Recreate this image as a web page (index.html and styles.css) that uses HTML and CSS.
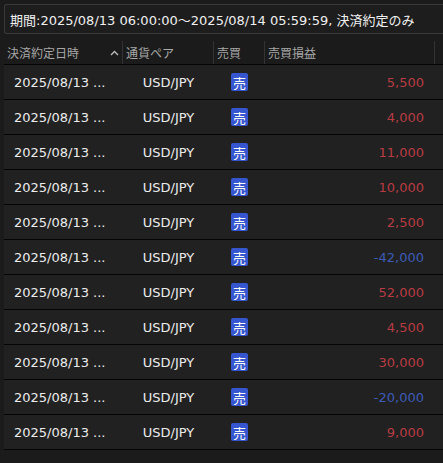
FILE: index.html
```html
<!DOCTYPE html>
<html lang="ja">
<head>
<meta charset="utf-8">
<link rel="stylesheet" href="styles.css">
</head>
<body>
<div class="period">期間:2025/08/13 06:00:00～2025/08/14 05:59:59, 決済約定のみ</div>
<div class="table">
  <div class="head">
    <div class="hc c1">決済約定日時<span class="caret"><svg width="9" height="6" viewBox="0 0 9 6"><path d="M1 5 L4.5 1.5 L8 5" fill="none" stroke="#bbb" stroke-width="1.4"/></svg></span></div>
    <div class="hc c2">通貨ペア</div>
    <div class="hc c3">売買</div>
    <div class="hc c4">売買損益</div>
    <div class="hc c5"></div>
  </div>
  <div class="row"><div class="c1 d">2025/08/13 ...</div><div class="c2 p">USD/JPY</div><div class="c3 b"><span class="badge">売</span></div><div class="c4 v pos">5,500</div></div>
  <div class="row"><div class="c1 d">2025/08/13 ...</div><div class="c2 p">USD/JPY</div><div class="c3 b"><span class="badge">売</span></div><div class="c4 v pos">4,000</div></div>
  <div class="row"><div class="c1 d">2025/08/13 ...</div><div class="c2 p">USD/JPY</div><div class="c3 b"><span class="badge">売</span></div><div class="c4 v pos">11,000</div></div>
  <div class="row"><div class="c1 d">2025/08/13 ...</div><div class="c2 p">USD/JPY</div><div class="c3 b"><span class="badge">売</span></div><div class="c4 v pos">10,000</div></div>
  <div class="row"><div class="c1 d">2025/08/13 ...</div><div class="c2 p">USD/JPY</div><div class="c3 b"><span class="badge">売</span></div><div class="c4 v pos">2,500</div></div>
  <div class="row"><div class="c1 d">2025/08/13 ...</div><div class="c2 p">USD/JPY</div><div class="c3 b"><span class="badge">売</span></div><div class="c4 v neg">-42,000</div></div>
  <div class="row"><div class="c1 d">2025/08/13 ...</div><div class="c2 p">USD/JPY</div><div class="c3 b"><span class="badge">売</span></div><div class="c4 v pos">52,000</div></div>
  <div class="row"><div class="c1 d">2025/08/13 ...</div><div class="c2 p">USD/JPY</div><div class="c3 b"><span class="badge">売</span></div><div class="c4 v pos">4,500</div></div>
  <div class="row"><div class="c1 d">2025/08/13 ...</div><div class="c2 p">USD/JPY</div><div class="c3 b"><span class="badge">売</span></div><div class="c4 v pos">30,000</div></div>
  <div class="row"><div class="c1 d">2025/08/13 ...</div><div class="c2 p">USD/JPY</div><div class="c3 b"><span class="badge">売</span></div><div class="c4 v neg">-20,000</div></div>
  <div class="row"><div class="c1 d">2025/08/13 ...</div><div class="c2 p">USD/JPY</div><div class="c3 b"><span class="badge">売</span></div><div class="c4 v pos">9,000</div></div>
</div>
</body>
</html>
```
FILE: styles.css
```css
html, body {
  margin: 0;
  padding: 0;
  background: #1b1b1b;
  height: 100%;
  overflow: hidden;
}
body {
  font-family: "DejaVu Sans", "Noto Sans CJK JP", sans-serif;
  color: #e8e8e8;
}
.period {
  margin: 4px 0 0 4px;
  box-sizing: border-box;
  height: 30px;
  border: 1px solid #3a3a3a;
  border-right: none;
  border-radius: 3px 0 0 3px;
  background: #1d1d1d;
  display: flex;
  align-items: center;
  padding-left: 5px;
  font-size: 13px;
  color: #f0f0f0;
  white-space: nowrap;
  overflow: hidden;
}
.table {
  margin: 7px 0 0 4px;
}
.head {
  display: flex;
  height: 23px;
  border-bottom: 1px solid #050505;
}
.hc {
  display: flex;
  align-items: center;
  font-family: "Noto Sans CJK JP", sans-serif;
  font-size: 12px;
  color: #a8a8a8;
  box-sizing: border-box;
  padding-left: 3px;
  border-right: 1px solid #333;
  height: 23px;
}
.hc.c5 { border-right: none; }
.caret {
  margin-left: auto;
  margin-right: 3px;
  display: flex;
  align-items: center;
}
.c1 { width: 119px; }
.c2 { width: 91px; }
.c3 { width: 51px; }
.c4 { width: 170px; }
.c5 { flex: 1; }
.row {
  display: flex;
  align-items: center;
  height: 34px;
  background: #212121;
  border-bottom: 1px solid #050505;
  font-size: 13px;
}
.row > div {
  box-sizing: border-box;
}
.d {
  padding-left: 10px;
  color: #ececec;
}
.p {
  text-align: center;
  color: #ececec;
}
.b {
  display: flex;
  justify-content: center;
}
.badge {
  display: flex;
  align-items: center;
  justify-content: center;
  width: 17px;
  height: 18px;
  background: #3556cf;
  color: #fff;
  border-radius: 2px;
  font-family: "Noto Sans CJK JP", sans-serif;
  font-size: 13px;
  line-height: 1;
}
.v {
  text-align: right;
  padding-right: 11px;
}
.pos { color: #b83c43; }
.neg { color: #3c5cb8; }
```
